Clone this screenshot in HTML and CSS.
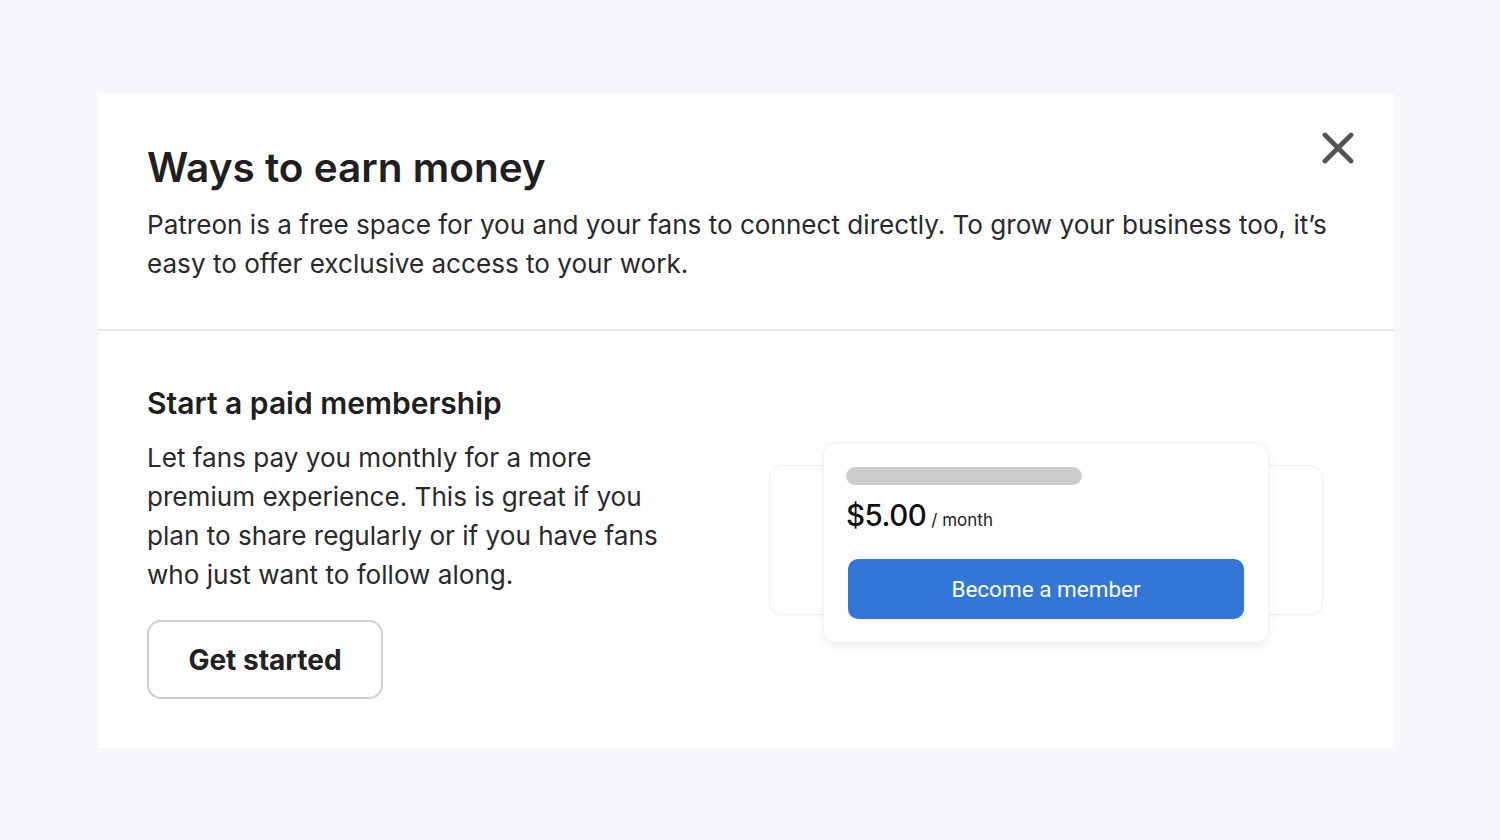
FILE: index.html
```html
<!DOCTYPE html>
<html>
<head>
<meta charset="utf-8">
<link rel="stylesheet" href="styles.css">
</head>
<body>
<div class="page">
  <div class="modal">
    <div class="header">
      <div class="header-text">
        <h1 class="title">Ways to earn money</h1>
        <p class="intro">Patreon is a free space for you and your fans to connect directly. To grow your business too, it’s easy to offer exclusive access to your work.</p>
      </div>
      <button class="close" aria-label="Close">
        <svg width="32" height="32" viewBox="0 0 32 32"><path d="M3 3 L29 29 M29 3 L3 29" stroke="#545454" stroke-width="4.8" stroke-linecap="round"/></svg>
      </button>
    </div>
    <div class="body">
      <div class="left">
        <h2 class="subtitle">Start a paid membership</h2>
        <p class="desc">Let fans pay you monthly for a more premium experience. This is great if you plan to share regularly or if you have fans who just want to follow along.</p>
        <button class="start">Get started</button>
      </div>
      <div class="illus">
        <div class="back-card"></div>
        <div class="front-card">
          <div class="bar"></div>
          <div class="price"><span class="amount">$5.00</span><span class="per">/ month</span></div>
          <div class="member">Become a member</div>
        </div>
      </div>
    </div>
  </div>
</div>
</body>
</html>
```
FILE: styles.css
```css
html, body {
  margin: 0;
  padding: 0;
  background: #f7f7fb;
  font-family: Inter, "Noto Sans", sans-serif;
  color: #222124;
}
.page {
  padding: 94px 106px 0 98px;
}
.modal {
  width: 1296px;
  height: 654px;
  background: #ffffff;
  display: flex;
  flex-direction: column;
}
.header {
  position: relative;
  padding: 0 40px 0 49px;
  height: 237px;
  border-bottom: 2px solid #e9e8ec;
  box-sizing: border-box;
}
.title {
  margin: 50px 0 0 0;
  font-size: 40.5px;
  line-height: 48px;
  font-weight: 600;
  letter-spacing: 0;
  color: #1f1e21;
}
.intro {
  margin: 13px 0 0 0;
  font-size: 26.1px;
  line-height: 39px;
  font-weight: 400;
  color: #2a292c;
  max-width: 1200px;
}
.close {
  position: absolute;
  top: 38px;
  right: 40px;
  padding: 0;
  border: none;
  background: none;
  width: 32px;
  height: 32px;
  display: flex;
}
.body {
  flex: 1;
  display: flex;
  align-items: center;
  padding: 0 72px 0 49px;
}
.left {
  width: 525px;
  padding-top: 4px;
}
.subtitle {
  margin: 0;
  font-size: 30px;
  line-height: 38px;
  font-weight: 600;
  color: #1f1e21;
}
.desc {
  margin: 16px 0 0 0;
  font-size: 26.1px;
  line-height: 39px;
  color: #2a292c;
}
.start {
  margin-top: 26px;
  width: 236px;
  height: 79px;
  border: 2px solid #cfced2;
  border-radius: 14px;
  background: #fff;
  font-family: Inter, "Noto Sans", sans-serif;
  font-size: 28px;
  font-weight: 700;
  color: #222124;
}
.illus {
  margin-left: auto;
  width: 552px;
  height: 200px;
  position: relative;
  top: 3px;
}
.back-card {
  position: absolute;
  left: 0;
  top: 23px;
  width: 552px;
  height: 148px;
  border-radius: 12px;
  background: #fff;
  box-shadow: 0 0 0 1px #f0f0f3, 0 2px 4px rgba(0,0,0,0.03);
}
.front-card {
  position: absolute;
  left: 54px;
  top: 0;
  width: 444px;
  height: 199px;
  box-sizing: border-box;
  padding: 24px 24px 0 22px;
  border-radius: 12px;
  background: #fff;
  box-shadow: 0 0 0 1px #f1f0f3, 0 4px 10px rgba(0,0,0,0.08);
}
.bar {
  width: 236px;
  height: 18px;
  border-radius: 9px;
  background: #cccbce;
}
.price {
  margin-top: 12px;
  display: flex;
  align-items: baseline;
  gap: 5px;
  height: 40px;
}
.amount {
  font-family: Inter, "Liberation Sans", sans-serif;
  font-size: 29.5px;
  font-weight: 500;
  color: #111;
  letter-spacing: -0.5px;
}
.per {
  font-family: Inter, "Liberation Sans", sans-serif;
  font-size: 17px;
  color: #222;
}
.member {
  margin: 22px 0 0 2px;
  height: 60px;
  border-radius: 10px;
  background: #3277d8;
  color: #fff;
  display: flex;
  align-items: center;
  justify-content: center;
  font-family: Roboto, "Liberation Sans", sans-serif;
  font-size: 22.5px;
}
```
